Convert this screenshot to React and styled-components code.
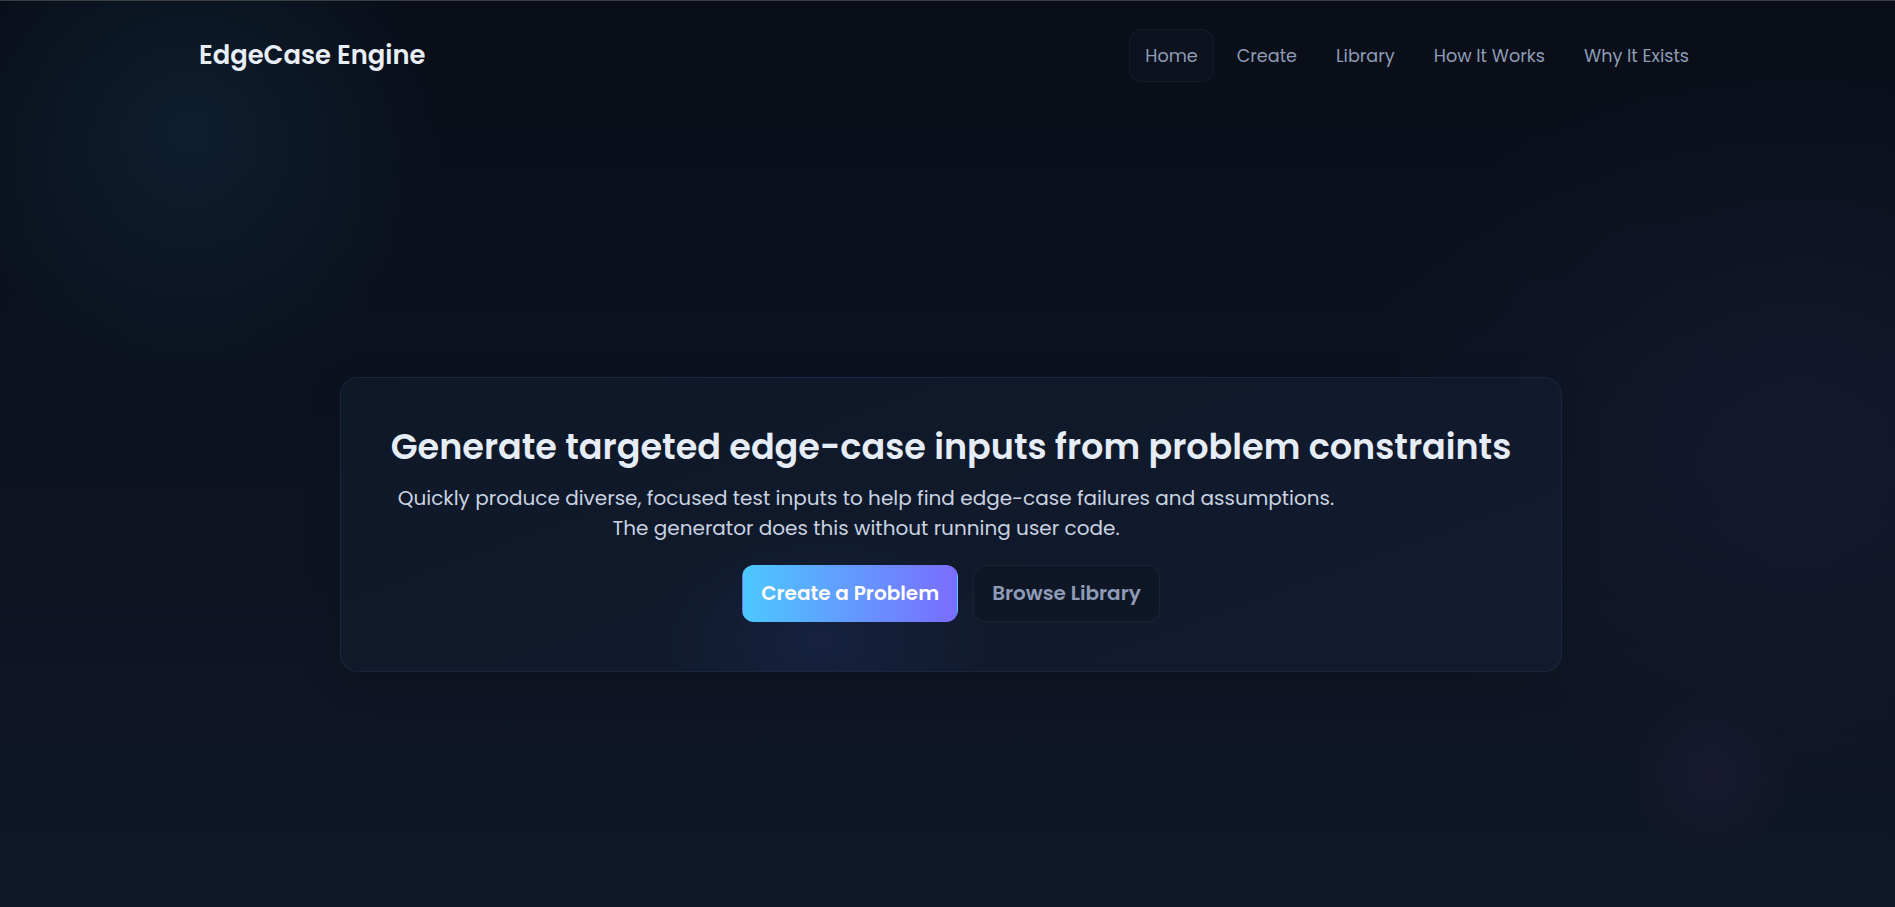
import React from "react";
import styled, { createGlobalStyle } from "styled-components";

const GlobalStyle = createGlobalStyle`
  html, body {
    margin: 0;
    padding: 0;
  }
  body {
    background: #0b111c;
    font-family: "Poppins", "Inter", "Noto Sans", sans-serif;
    color: #e5ecf5;
  }
  * {
    box-sizing: border-box;
  }
`;

const Page = styled.div`
  min-height: 100vh;
  border-top: 1px solid #3b3d40;
  overflow: hidden;
  background:
    radial-gradient(circle at 190px 130px, rgba(20, 52, 78, 0.4) 0, rgba(20, 52, 78, 0) 250px),
    radial-gradient(ellipse 440px 380px at 1800px 430px, rgba(40, 40, 82, 0.28), rgba(40, 40, 82, 0) 100%),
    radial-gradient(circle at 1710px 775px, rgba(60, 40, 100, 0.2) 0, rgba(60, 40, 100, 0) 80px),
    linear-gradient(180deg, #090e18 0%, #0c1220 45%, #101726 100%);
`;

const Header = styled.header`
  display: flex;
  align-items: center;
  justify-content: space-between;
  height: 109px;
  padding: 0 190px 0 199px;
`;

const Logo = styled.div`
  font-size: 25.8px;
  font-weight: 600;
  color: #e8eef6;
`;

const Nav = styled.nav`
  display: flex;
  align-items: center;
  gap: 7px;
`;

const NavLink = styled.a`
  display: flex;
  align-items: center;
  height: 53px;
  padding: 0 15px;
  border-radius: 13px;
  font-size: 17.6px;
  color: #8f9cb6;
  border: 1px solid ${(p) => (p.$active ? "rgba(148, 163, 184, 0.07)" : "transparent")};
  background: ${(p) => (p.$active ? "rgba(13, 20, 34, 0.6)" : "transparent")};
  text-decoration: none;
  cursor: pointer;
`;

const Main = styled.main`
  display: flex;
  justify-content: center;
  padding: 267px 20px 0 27px;
`;

const Card = styled.section`
  width: 1222px;
  padding: 45px 40px 49px;
  border-radius: 18px;
  border: 1px solid rgba(70, 85, 150, 0.2);
  background:
    radial-gradient(ellipse 170px 110px at 480px 262px, rgba(30, 50, 105, 0.32), rgba(30, 50, 105, 0) 100%),
    linear-gradient(160deg, #0f1827 0%, #111a2c 60%, #131a2e 100%);
  box-shadow: 0 10px 40px rgba(0, 0, 0, 0.1);
  display: flex;
  flex-direction: column;
`;

const Title = styled.h1`
  margin: 0;
  text-align: center;
  font-size: 35px;
  line-height: 48.6px;
  font-weight: 600;
  color: #e6edf6;
  white-space: nowrap;
`;

const Lead = styled.p`
  margin: 11px 0 0;
  max-width: 970px;
  text-align: center;
  font-size: 20px;
  line-height: 30px;
  color: #c9d3e1;
`;

const Actions = styled.div`
  display: flex;
  justify-content: center;
  gap: 15px;
  margin-top: 22px;
`;

const Button = styled.button`
  height: 57px;
  padding: 0 18px;
  border-radius: 12px;
  font-family: inherit;
  font-size: 20px;
  font-weight: 600;
  cursor: pointer;
  border: 1px solid ${(p) => (p.$primary ? "transparent" : "rgba(148, 163, 184, 0.09)")};
  color: ${(p) => (p.$primary ? "#ffffff" : "#8e9bb7")};
  background: ${(p) =>
    p.$primary ? "linear-gradient(90deg, #4cc8ff 0%, #7a6cff 100%)" : "#0f1727"};
`;

const links = ["Home", "Create", "Library", "How It Works", "Why It Exists"];

export default function App() {
  return (
    <>
      <GlobalStyle />
      <Page>
        <Header>
          <Logo>EdgeCase Engine</Logo>
          <Nav>
            {links.map((l, i) => (
              <NavLink key={l} $active={i === 0}>
                {l}
              </NavLink>
            ))}
          </Nav>
        </Header>
        <Main>
          <Card>
            <Title>Generate targeted edge-case inputs from problem constraints</Title>
            <Lead>
              Quickly produce diverse, focused test inputs to help find edge-case failures and assumptions.
              <br />
              The generator does this without running user code.
            </Lead>
            <Actions>
              <Button $primary>Create a Problem</Button>
              <Button>Browse Library</Button>
            </Actions>
          </Card>
        </Main>
      </Page>
    </>
  );
}
